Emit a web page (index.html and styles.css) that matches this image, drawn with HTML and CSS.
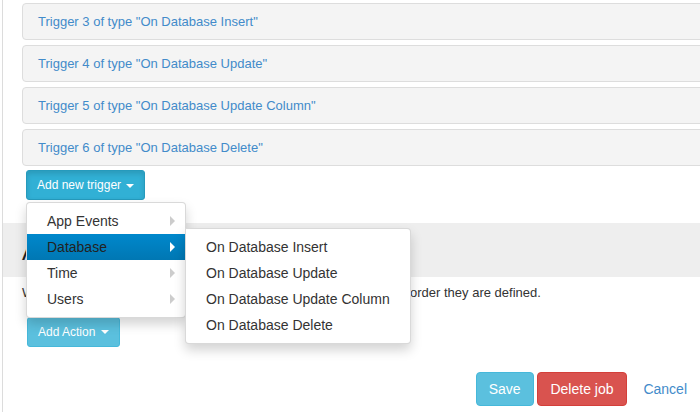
FILE: index.html
```html
<!DOCTYPE html>
<html>
<head>
<meta charset="utf-8">
<title>Job triggers</title>
<link rel="stylesheet" href="styles.css">
</head>
<body>
<div class="page">
  <div class="triggers">
    <div class="panel">Trigger 3 of type "On Database Insert"</div>
    <div class="panel">Trigger 4 of type "On Database Update"</div>
    <div class="panel">Trigger 5 of type "On Database Update Column"</div>
    <div class="panel">Trigger 6 of type "On Database Delete"</div>
    <div class="trigger-row">
      <div class="trigger-add">
        <button class="btn btn-info btn-sm active">Add new trigger <span class="caret"></span></button>
        <ul class="dropdown-menu">
          <li class="has-sub"><a href="#">App Events</a></li>
          <li class="has-sub active"><a href="#">Database</a>
            <ul class="dropdown-menu submenu">
              <li><a href="#">On Database Insert</a></li>
              <li><a href="#">On Database Update</a></li>
              <li><a href="#">On Database Update Column</a></li>
              <li><a href="#">On Database Delete</a></li>
            </ul>
          </li>
          <li class="has-sub"><a href="#">Time</a></li>
          <li class="has-sub"><a href="#">Users</a></li>
        </ul>
      </div>
    </div>
  </div>
  <div class="actions-head">
    <h3>Actions</h3>
  </div>
  <p class="desc">When this job is triggered, all actions shown will be executed in the order they are defined.</p>
  <div class="action-row">
    <button class="btn btn-info btn-sm">Add Action <span class="caret"></span></button>
  </div>
  <div class="footer">
    <button class="btn btn-info">Save</button>
    <button class="btn btn-danger">Delete job</button>
    <button class="btn btn-link">Cancel</button>
  </div>
</div>
</body>
</html>
```

FILE: styles.css
```css
* {
  box-sizing: border-box;
}

html,
body {
  margin: 0;
  height: 100%;
  overflow: hidden;
  background: #fff;
}

body {
  font-family: "Liberation Sans", Arial, sans-serif;
  font-size: 13px;
  line-height: 1.42857;
  color: #333;
}

.page {
  margin-left: 2px;
  border-left: 1px solid #dcdcdc;
  min-height: 100%;
}

.triggers {
  padding: 3px 0 0 19px;
}

.panel {
  margin: 0 -30px 5px 0;
  padding: 10px 15px;
  background: #f4f4f4;
  border: 1px solid #ddd;
  border-radius: 4px;
  line-height: 15px;
  color: #428bca;
}

.trigger-row {
  display: flex;
  margin: -1px 0 0 4px;
}

.trigger-add {
  position: relative;
}

.btn {
  display: inline-block;
  margin: 0;
  padding: 6px 12px;
  font-family: inherit;
  font-size: 14px;
  line-height: 20px;
  color: #fff;
  background: none;
  border: 1px solid transparent;
  border-radius: 4px;
  white-space: nowrap;
  vertical-align: middle;
  cursor: pointer;
}

.btn-sm {
  padding: 5px 10px;
  font-size: 12px;
  line-height: 18px;
  border-radius: 3px;
}

.btn-info {
  background: #5bc0de;
  border-color: #46b8da;
}

.btn-info.active {
  background: #31b0d5;
  border-color: #269abc;
  box-shadow: inset 0 3px 5px rgba(0, 0, 0, 0.125);
}

.btn-danger {
  background: #d9534f;
  border-color: #d43f3a;
}

.btn-link {
  color: #428bca;
}

.caret {
  display: inline-block;
  width: 0;
  height: 0;
  margin-left: 2px;
  vertical-align: middle;
  border-top: 4px solid;
  border-left: 4px solid transparent;
  border-right: 4px solid transparent;
}

.dropdown-menu {
  position: absolute;
  top: 100%;
  left: 0;
  z-index: 10;
  width: 160px;
  margin: 2px 0 0;
  padding: 5px 0;
  list-style: none;
  background: #fff;
  border: 1px solid rgba(0, 0, 0, 0.15);
  border-radius: 4px;
  box-shadow: 0 6px 12px rgba(0, 0, 0, 0.175);
  font-size: 14px;
}

.dropdown-menu li {
  position: relative;
}

.dropdown-menu a {
  display: block;
  padding: 3px 20px;
  line-height: 20px;
  color: #333;
  text-decoration: none;
  white-space: nowrap;
}

.has-sub > a::after {
  content: "";
  float: right;
  width: 0;
  height: 0;
  margin: 5px -10px 0 0;
  border-style: solid;
  border-width: 5px 0 5px 5px;
  border-color: transparent transparent transparent #ccc;
}

.has-sub.active > a {
  background: linear-gradient(#0088cc, #0077b3);
  color: #222;
}

.has-sub.active > a::after {
  border-left-color: #fff;
}

.dropdown-menu.submenu {
  top: 0;
  left: 100%;
  width: auto;
  margin: -6px 0 0;
  border-radius: 0 4px 4px 4px;
}

.actions-head {
  margin-top: 23px;
  padding: 16px 19px 12px;
  background: #eee;
}

.actions-head h3 {
  margin: 0;
  font-size: 24px;
  font-weight: 500;
  line-height: 26px;
  color: #222;
}

.desc {
  margin: 7px 0 14px;
  padding-left: 19px;
  white-space: nowrap;
}

.action-row {
  display: flex;
  padding-left: 24px;
}

.footer {
  margin-top: 25px;
  text-align: right;
  font-size: 14px;
}
```
